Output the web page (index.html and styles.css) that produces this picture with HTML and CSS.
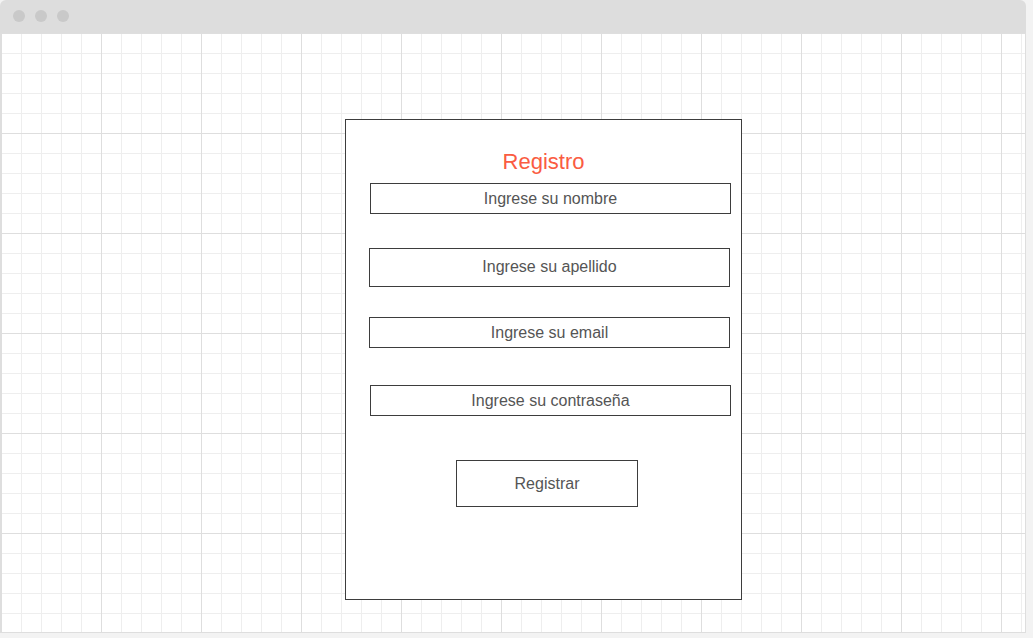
FILE: index.html
```html
<!DOCTYPE html>
<html lang="es">
<head>
<meta charset="utf-8">
<title>Registro</title>
<link rel="stylesheet" href="styles.css">
</head>
<body>
<div class="window">
  <div class="titlebar">
    <span class="dot"></span><span class="dot"></span><span class="dot"></span>
  </div>
  <div class="canvas">
    <div class="card">
      <div class="title">Registro</div>
      <div class="field f1">Ingrese su nombre</div>
      <div class="field f2">Ingrese su apellido</div>
      <div class="field f3">Ingrese su email</div>
      <div class="field f4">Ingrese su contraseña</div>
      <div class="button">Registrar</div>
    </div>
  </div>
</div>
</body>
</html>
```

FILE: styles.css
```css
html, body {
  margin: 0;
  padding: 0;
}
body {
  background: #f3f3f3;
  font-family: "Liberation Sans", Arial, sans-serif;
  width: 1033px;
  height: 638px;
  overflow: hidden;
}
.window {
  width: 1026px;
  height: 633px;
  display: flex;
  flex-direction: column;
}
.titlebar {
  height: 33px;
  background: #dddddd;
  border-radius: 6px 6px 0 0;
  display: flex;
  align-items: center;
  gap: 10px;
  padding-left: 13px;
  box-sizing: border-box;
  flex: none;
}
.dot {
  width: 12px;
  height: 12px;
  border-radius: 50%;
  background: #c9c9c9;
  margin-top: -1px;
}
.canvas {
  flex: 1;
  background-color: #ffffff;
  border: 1px solid #dedede;
  border-top: none;
  background-image:
    linear-gradient(to right, #dedede 1px, transparent 1px),
    linear-gradient(to bottom, #dedede 1px, transparent 1px),
    linear-gradient(to right, #eeeeee 1px, transparent 1px),
    linear-gradient(to bottom, #eeeeee 1px, transparent 1px);
  background-size: 100px 100px, 100px 100px, 20px 20px, 20px 20px;
  padding-top: 86px;
  padding-left: 344px;
  box-sizing: border-box;
}
.card {
  width: 397px;
  height: 481px;
  box-sizing: border-box;
  border: 1px solid #3d3d3d;
  background: #ffffff;
  padding-top: 29px;
  display: flex;
  flex-direction: column;
  align-items: flex-start;
}
.title {
  align-self: stretch;
  text-align: center;
  font-size: 22px;
  line-height: 26px;
  color: #fa5c42;
}
.field {
  width: 361px;
  box-sizing: border-box;
  border: 1px solid #3d3d3d;
  color: #555555;
  font-size: 16px;
  text-align: center;
  display: flex;
  align-items: center;
  justify-content: center;
}
.f1 { height: 31px; margin-top: 8px; margin-left: 24px; }
.f2 { height: 39px; margin-top: 34px; margin-left: 23px; padding-bottom: 2px; }
.f3 { height: 31px; margin-top: 30px; margin-left: 23px; }
.f4 { height: 31px; margin-top: 37px; margin-left: 24px; }
.button {
  width: 182px;
  height: 47px;
  box-sizing: border-box;
  border: 1px solid #3d3d3d;
  margin-top: 44px;
  margin-left: 110px;
  color: #555555;
  font-size: 16px;
  display: flex;
  align-items: center;
  justify-content: center;
}
```
